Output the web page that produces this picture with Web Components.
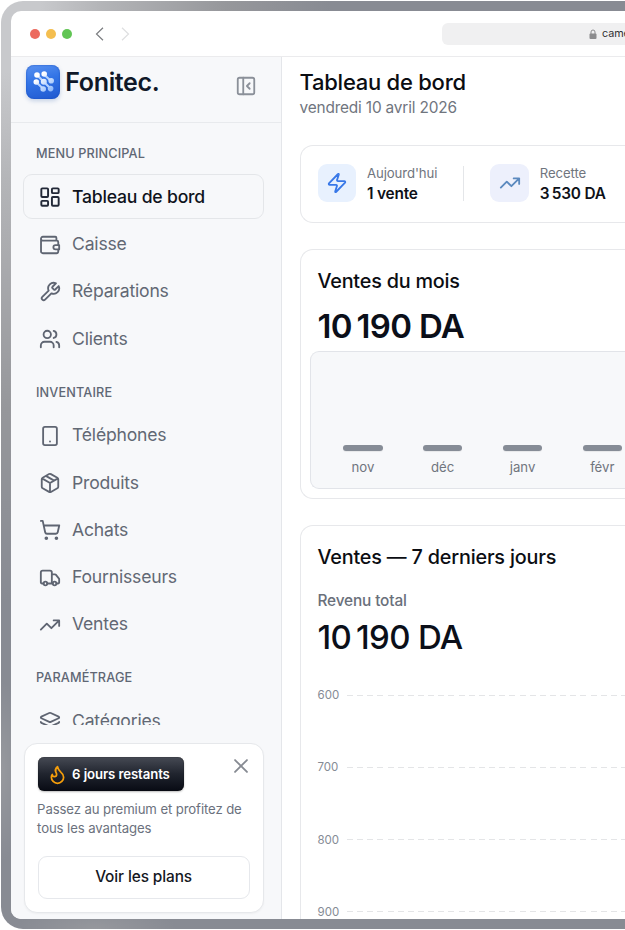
<!DOCTYPE html>
<html lang="fr">
<head>
<meta charset="utf-8">
<title>Fonitec</title>
<style>
html,body{margin:0;height:930px;overflow:hidden;background:#fff}
body{font-family:Inter,"Liberation Sans",sans-serif;color:#0b0f19}
</style>
</head>
<body>
<browser-frame>
  <browser-bar slot="bar">came</browser-bar>
  <side-bar slot="side">
    <side-header slot="head">Fonitec.</side-header>
    <nav-group label="MENU PRINCIPAL">
      <nav-item icon="dashboard" active>Tableau de bord</nav-item>
      <nav-item icon="wallet">Caisse</nav-item>
      <nav-item icon="wrench">Réparations</nav-item>
      <nav-item icon="users">Clients</nav-item>
    </nav-group>
    <nav-group label="INVENTAIRE">
      <nav-item icon="phone">Téléphones</nav-item>
      <nav-item icon="box">Produits</nav-item>
      <nav-item icon="cart">Achats</nav-item>
      <nav-item icon="truck">Fournisseurs</nav-item>
      <nav-item icon="trend">Ventes</nav-item>
    </nav-group>
    <nav-group label="PARAMÉTRAGE">
      <nav-item icon="layers">Catégories</nav-item>
    </nav-group>
    <promo-card slot="foot" badge="6 jours restants" action="Voir les plans">Passez au premium et profitez de tous les avantages</promo-card>
  </side-bar>
  <page-heading date="vendredi 10 avril 2026">Tableau de bord</page-heading>
  <stat-card>
    <stat-item icon="zap" label="Aujourd'hui" style="--tile:#e8f1fe;--ink:#3878e8">1 vente</stat-item>
    <stat-item icon="trend" label="Recette" divided style="--tile:#edf0fc;--ink:#5c8abf">3&#8239;530 DA</stat-item>
  </stat-card>
  <month-card heading="Ventes du mois" total="10&#8239;190 DA" months="nov,déc,janv,févr"></month-card>
  <week-card heading="Ventes — 7 derniers jours" label="Revenu total" total="10&#8239;190 DA" ticks="600,700,800,900"></week-card>
</browser-frame>
<script>
const ICONS = {
  dashboard:'<g transform="translate(12 12) scale(1.05) translate(-12 -12)"><rect x="3" y="3" width="7" height="9" rx="1"/><rect x="14" y="3" width="7" height="5" rx="1"/><rect x="14" y="12" width="7" height="9" rx="1"/><rect x="3" y="16" width="7" height="5" rx="1"/></g>',
  wallet:'<path d="M19 7V4.3A1.3 1.3 0 0 0 17.700 3H4.200A2 2 0 0 0 2.200 5v14a2 2 0 0 0 2 2h15a1.800 1.800 0 0 0 1.800-1.800V17M2.200 5.200A2 2 0 0 0 4.200 7.200H19.500A1.500 1.500 0 0 1 21 8.700V12"/><path d="M22 12.200h-4a2.300 2.300 0 0 0 0 4.600h4z"/>',
  wrench:'<path d="M14.7 6.3a1 1 0 0 0 0 1.400l1.600 1.600a1 1 0 0 0 1.400 0l3.770-3.770a6 6 0 0 1-7.940 7.940l-6.910 6.910a2.120 2.120 0 0 1-3-3l6.910-6.910a6 6 0 0 1 7.940-7.940l-3.760 3.760z"/>',
  users:'<path d="M16 21v-2a4 4 0 0 0-4-4H6a4 4 0 0 0-4 4v2"/><circle cx="9" cy="7" r="4"/><path d="M22 21v-2a4 4 0 0 0-3-3.870M16 3.130a4 4 0 0 1 0 7.750"/>',
  phone:'<rect x="4.500" y="2" width="15" height="20" rx="2"/><path d="M12 18h.01"/>',
  box:'<path d="M11 21.730a2 2 0 0 0 2 0l7-4A2 2 0 0 0 21 16V8a2 2 0 0 0-1-1.730l-7-4a2 2 0 0 0-2 0l-7 4A2 2 0 0 0 3 8v8a2 2 0 0 0 1 1.730zM12 22V12M3.300 7 12 12l8.700-5M7.500 4.270l9 5.150"/>',
  cart:'<circle cx="8" cy="21" r="1"/><circle cx="19" cy="21" r="1"/><path d="M2.050 2.050h2l2.660 12.420a2 2 0 0 0 2 1.580h9.780a2 2 0 0 0 1.950-1.570l1.650-7.430H5.120"/>',
  truck:'<path d="M14 18V6a2 2 0 0 0-2-2H4a2 2 0 0 0-2 2v11a1 1 0 0 0 1 1h2M15 18H9M19 18h2a1 1 0 0 0 1-1v-3.650a1 1 0 0 0-.220-.624l-3.480-4.350A1 1 0 0 0 17.520 8H14"/><circle cx="17" cy="18" r="2"/><circle cx="7" cy="18" r="2"/>',
  trend:'<path d="M16 7h6v6M22 7l-8.500 8.500-5-5L2 17"/>',
  layers:'<path d="M12.830 2.180a2 2 0 0 0-1.660 0L2.600 6.080a1 1 0 0 0 0 1.830l8.580 3.910a2 2 0 0 0 1.660 0l8.580-3.900a1 1 0 0 0 0-1.830zM2 12a1 1 0 0 0 .580.910l8.600 3.910a2 2 0 0 0 1.650 0l8.580-3.900A1 1 0 0 0 22 12M2 17a1 1 0 0 0 .580.910l8.600 3.910a2 2 0 0 0 1.650 0l8.580-3.900A1 1 0 0 0 22 17"/>',
  zap:'<path d="M4 14a1 1 0 0 1-.780-1.630l9.900-10.200a.5.5 0 0 1 .860.460l-1.920 6.020A1 1 0 0 0 13 10h7a1 1 0 0 1 .780 1.630l-9.900 10.200a.5.5 0 0 1-.860-.460l1.920-6.020A1 1 0 0 0 11 14z"/>',
  panel:'<rect x="3" y="3" width="18" height="18" rx="2"/><path d="M9 3v18M16 15l-3-3 3-3"/>',
  flame:'<path d="M8.500 14.500A2.500 2.500 0 0 0 11 12c0-1.380-.5-2-1-3-1.072-2.143-.224-4.054 2-6 .5 2.500 2 4.900 4 6.500 2 1.600 3 3.500 3 5.500a7 7 0 1 1-14 0c0-1.153.433-2.294 1-3a2.500 2.500 0 0 0 2.500 2.500z"/>',
  close:'<path d="M18.500 5.500l-13 13M5.500 5.500l13 13"/>'
};
const define = (name, render) => customElements.define(name, class extends HTMLElement {
  connectedCallback() {
    if (this.shadowRoot) return;
    this.attachShadow({mode:'open'}).innerHTML = render(k => this.getAttribute(k) || '');
  }
});

define('ui-icon', a => `<style>:host{display:block;flex:none;width:22px;height:22px}svg{display:block;width:100%;height:100%;fill:none;stroke:currentColor;stroke-width:2;stroke-linecap:round;stroke-linejoin:round}</style><svg viewBox="0 0 24 24">${ICONS[a('name')]}</svg>`);

define('browser-frame', () => `<style>
:host{display:block;box-sizing:border-box;height:928px;margin:1px 0 0 1px;padding:10px 0 10px 10px;border-radius:22px 0 0 22px;
background:radial-gradient(ellipse 24px 90px at 0 770px,#97999e,#97999e00),radial-gradient(ellipse 80px 24px at 95px 928px,#96989d,#96989d00),radial-gradient(ellipse 330px 600px at 0 0,#c8c9cc 12%,#b4b5b8 30%,#96979b 68%,#888b93)}
.win{display:flex;flex-direction:column;height:908px;border-radius:10px 0 0 10px;overflow:hidden;background:#fff}
.body{display:flex;flex:1;min-height:0}
main{flex:1;min-width:0;padding:10px 0 0 17.500px;overflow:hidden}
</style><div class="win"><slot name="bar"></slot><div class="body"><slot name="side"></slot><main><slot></slot></main></div></div>`);

define('browser-bar', () => `<style>
:host{display:flex;align-items:center;box-sizing:border-box;height:46px;flex:none;padding-left:19px;border-bottom:1px solid #ebebed}
.dots{display:flex;gap:6px}.dots i{width:10px;height:10px;border-radius:50%}
.nav{display:flex;gap:17px;margin-left:22.500px}.nav svg{width:9px;height:14px;fill:none;stroke:#7b7d80;stroke-width:1.200}
.nav svg+svg{stroke:#dedfe0}
.url{display:flex;align-items:center;margin-left:312.500px;flex:1;height:22px;border-radius:6px 0 0 6px;background:#f0f0f1;box-sizing:border-box;padding-left:147px;font-size:10.800px;letter-spacing:-.100px;color:#303033;overflow:hidden;white-space:nowrap}
.url svg{width:8px;height:10px;margin-right:5px;flex:none}
</style><div class="dots"><i style="background:#ec6a5e"></i><i style="background:#f4be4f"></i><i style="background:#61c554"></i></div>
<div class="nav"><svg viewBox="0 0 9 14"><path d="M8 .7 1.500 7 8 13.300"/></svg><svg viewBox="0 0 9 14"><path d="M1 .7 7.500 7 1 13.300"/></svg></div>
<div class="url"><svg viewBox="0 0 8 10"><path d="M2 5V3a2 2 0 0 1 4 0v2" fill="none" stroke="#8c8c8e"/><rect x=".5" y="4.500" width="7" height="5.500" rx="1" fill="#8c8c8e"/></svg><slot></slot></div>`);

define('side-bar', () => `<style>
:host{display:flex;flex-direction:column;box-sizing:border-box;width:271px;flex:none;background:#f7f8fa;border-right:1px solid #e4e6ea}
nav{height:602px;overflow:hidden;padding:22px 17px 0 12px;box-sizing:border-box;display:flex;flex-direction:column;gap:22.500px}
</style><slot name="head"></slot><nav><slot></slot></nav><slot name="foot"></slot>`);

define('side-header', () => `<style>
:host{display:flex;align-items:flex-start;box-sizing:border-box;height:66px;flex:none;padding:8px 24px 0 15.300px;border-bottom:1.500px solid #e8eaed}
.logo{width:34px;height:34px;border-radius:8px;background:linear-gradient(165deg,#5b93f1,#3274e6 45%,#2058cf);box-shadow:0 2px 4px #3b68b044,inset 0 0 2px #174dbd}
.logo svg{display:block;width:34px;height:34px}
b{font-weight:600;font-size:25px;line-height:34px;margin-left:5px;color:#101828;letter-spacing:-.350px;flex:1}
ui-icon{color:#8b9099;margin-top:10px}
</style><div class="logo"><svg viewBox="0 0 34 34"><defs><linearGradient id="g" gradientUnits="userSpaceOnUse" x1="9" y1="7" x2="26" y2="27"><stop offset=".25" stop-color="#fff"/><stop offset="1" stop-color="#86b4fa"/></linearGradient></defs><g stroke="#b4d2ff" stroke-width="2.200"><path d="M11 10 25 24M18 9.500l7 6.500M10 17l7.500 7"/></g><g fill="url(#g)"><circle cx="11" cy="10" r="2.800"/><circle cx="18.200" cy="9" r="2.800"/><circle cx="10.300" cy="17" r="2.800"/><circle cx="17.800" cy="16.700" r="3"/><circle cx="25.200" cy="15.800" r="2.800"/><circle cx="17.200" cy="24" r="2.800"/><circle cx="24.600" cy="23.600" r="2.800"/></g></svg></div><b><slot></slot></b><ui-icon name="panel"></ui-icon>`);

define('nav-group', a => `<style>
:host{display:flex;flex-direction:column;gap:2.250px;flex:none}
.l{font-size:12.700px;line-height:17px;font-weight:500;color:#606774;padding-left:13px;margin-bottom:10px;letter-spacing:.140px}
</style><div class="l">${a('label')}</div><slot></slot>`);

define('nav-item', a => `<style>
:host{display:flex;align-items:center;gap:11px;box-sizing:border-box;height:45px;padding:0 15px;border:1px solid transparent;border-radius:9px;font-size:17.600px;line-height:24px;color:#626874;letter-spacing:-.200px}
:host([active]){border-color:#e4e6e9;color:#0f131c;font-weight:500}
ui-icon{color:#5f6572;position:relative;top:.5px;left:.3px}:host([active]) ui-icon{color:#232938}
</style><ui-icon name="${a('icon')}"></ui-icon><span><slot></slot></span>`);

define('promo-card', a => `<style>
:host{display:block;box-sizing:border-box;width:240px;height:170px;margin:18px 0 0 12.600px;padding:13px;background:#fff;border:1px solid #e6e8eb;border-radius:13px;box-shadow:0 1px 2px #0000000a}
.top{display:flex;justify-content:space-between;align-items:flex-start}
.badge{display:flex;align-items:center;gap:4.500px;box-sizing:border-box;width:146px;height:34px;border-radius:6px;padding-left:9px;background:linear-gradient(#464a54,#20242e 50%,#080b14);color:#fff;font-weight:600;font-size:13.200px;letter-spacing:-.100px;box-shadow:0 1px 2px #0004,inset 0 0 1px #000;white-space:nowrap}
.badge ui-icon{color:#f59e0b;width:21px;height:21px}
.top>ui-icon{color:#868a92;margin:-2px -2.500px 0 0}
p{margin:9px 0 17.500px -.5px;font-size:13.200px;line-height:19.400px;color:#6b717d;width:214px;letter-spacing:-.120px}
button{display:block;box-sizing:border-box;width:212px;height:43px;border:1px solid #e6e8ec;border-radius:9px;background:#fff;font:500 15.400px/20px Inter,sans-serif;letter-spacing:-.100px;color:#15181f;padding:0 0 2px}
</style><div class="top"><div class="badge"><ui-icon name="flame"></ui-icon><span>${a('badge')}</span></div><ui-icon name="close"></ui-icon></div><p><slot></slot></p><button>${a('action')}</button>`);

define('page-heading', a => `<style>
:host{display:block;height:78px}
h1{margin:0;font-size:22px;line-height:30px;font-weight:500;color:#0b0d12;letter-spacing:-.250px}
p{margin:1px 0 0;font-size:15.400px;line-height:20px;color:#70757e;letter-spacing:-.170px}
</style><h1><slot></slot></h1><p>${a('date')}</p>`);

define('stat-card', () => `<style>
:host{display:flex;box-sizing:border-box;height:78px;border:1px solid #e7e8eb;border-right:0;border-radius:13px 0 0 13px;align-items:center;padding:0 0 2px 17px}
</style><slot></slot>`);

define('stat-item', a => `<style>
:host{display:flex;align-items:center;box-sizing:border-box}
:host([divided]){border-left:1px solid #e4e6e9;height:35px;margin-left:26px;padding-left:26px}
.t{width:38.500px;height:38.500px;border-radius:9px;background:var(--tile);color:var(--ink);display:grid;place-items:center;margin-right:11px}
small{display:block;font-size:13.200px;line-height:20px;color:#70757e;letter-spacing:-.100px}
b{display:block;font-size:15.400px;line-height:21px;font-weight:600;color:#0e1118;white-space:nowrap;letter-spacing:-.200px}
</style><div class="t"><ui-icon name="${a('icon')}"></ui-icon></div><div><small>${a('label')}</small><b><slot></slot></b></div>`);

define('month-card', a => `<style>
:host{display:block;box-sizing:border-box;height:250px;margin-top:26px;border:1px solid #e7e8eb;border-right:0;border-radius:13px 0 0 13px;padding:18px 0 9px 9px}
h2{margin:0 0 0 8px;font-size:19.800px;line-height:26px;font-weight:500;color:#0b0d12;letter-spacing:-.200px}
b{display:block;margin:12px 0 0 8px;font-size:33px;line-height:40px;font-weight:600;letter-spacing:-.700px}
.c{display:flex;align-items:flex-end;box-sizing:border-box;height:138px;margin-top:5px;padding:0 0 11px 12.500px;background:#f7f8fa;border:1px solid #e2e4e9;border-right:0;border-radius:9px 0 0 9px;overflow:hidden}
.m{width:79.800px;flex:none;text-align:center;font-size:13.200px;line-height:20px;color:#70757e}
.m i{display:block;width:39.500px;height:6px;border-radius:3px;background:#868c96;margin:0 auto 6px;box-shadow:0 1px 1px #0001}
</style><h2>${a('heading')}</h2><b>${a('total')}</b><div class="c">${a('months').split(',').map(m=>`<div class="m"><i></i>${m}</div>`).join('')}</div>`);

define('week-card', a => `<style>
:host{display:block;box-sizing:border-box;height:450px;margin-top:26px;border:1px solid #e7e8eb;border-right:0;border-radius:13px 0 0 13px;padding:18px 0 0 17px}
h2{margin:0;font-size:19.800px;line-height:26px;font-weight:500;color:#0b0d12;letter-spacing:-.180px}
small{display:block;margin-top:21px;font-size:15.400px;line-height:20px;font-weight:500;color:#6a707b;letter-spacing:-.150px}
b{display:block;margin:6px 0 30px;font-size:33px;line-height:40px;font-weight:500;letter-spacing:-.700px}
.r{display:flex;align-items:center;height:16px;margin-bottom:56.300px;font-size:11.500px;color:#858b95}
.r span{width:29px}.r i{flex:1;height:1px;background:repeating-linear-gradient(90deg,#e4e5e7 0 6px,transparent 6px 10.150px)}
</style><h2>${a('heading')}</h2><small>${a('label')}</small><b>${a('total')}</b>${a('ticks').split(',').map(t=>`<div class="r"><span>${t}</span><i></i></div>`).join('')}`);
</script>
</body>
</html>
